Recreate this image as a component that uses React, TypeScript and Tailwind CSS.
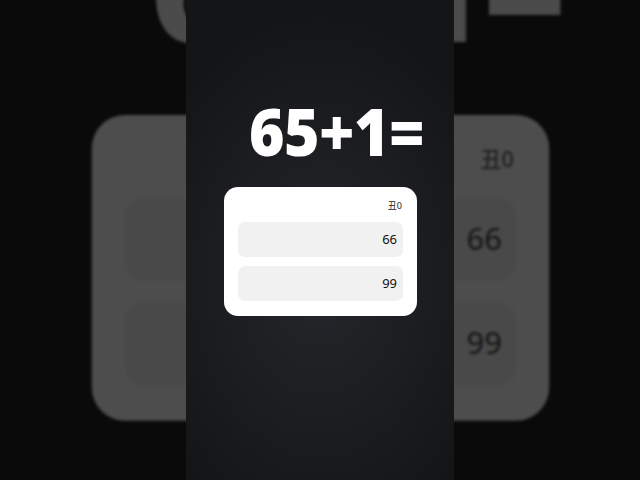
import React from "react";

function Scene({ dim }: { dim?: boolean }) {
  return (
    <div className="w-[268px] h-[480px] flex flex-col">
      <div className="pl-[63px] pt-[97px] h-[172px]">
        <div
          className={
            "inline-block origin-left scale-x-[0.92] text-[66px] leading-none font-extrabold tracking-[-0.01em] whitespace-nowrap " +
            (dim ? "text-[#4b4b4b]" : "text-white")
          }
          style={{ fontFamily: '"Open Sans", "Noto Sans", sans-serif' }}
        >
          65+1=
        </div>
      </div>
      <div
        className={
          "mt-[15px] ml-[38px] w-[193px] h-[129px] rounded-[14px] px-[14px] pt-[13px] flex flex-col " +
          (dim ? "bg-[#4d4d4d]" : "bg-white")
        }
        style={{ fontFamily: '"Noto Sans", "Noto Sans CJK SC", sans-serif' }}
      >
        <div
          className={
            "text-right text-[9px] leading-[12px] pr-[1px] h-[22px] " +
            (dim ? "text-[#151515]" : "text-[#222]")
          }
        >
          丑0
        </div>
        <div
          className={
            "h-[35px] rounded-[7px] flex items-center justify-end pr-[6px] text-[13px] " +
            (dim ? "bg-[#494949] text-[#141414]" : "bg-[#f1f1f1] text-[#111]")
          }
        >
          66
        </div>
        <div
          className={
            "mt-[9px] h-[35px] rounded-[7px] flex items-center justify-end pr-[6px] text-[13px] " +
            (dim ? "bg-[#494949] text-[#141414]" : "bg-[#f1f1f1] text-[#111]")
          }
        >
          99
        </div>
      </div>
    </div>
  );
}

export default function App() {
  return (
    <div className="w-[640px] h-[480px] bg-[#0a0a0a] relative overflow-hidden">
      <div className="absolute inset-0 overflow-hidden">
        <div className="absolute left-[186px] top-0 origin-[134.5px_239.5px] scale-[2.37] blur-[0.6px]">
          <Scene dim />
        </div>
      </div>
      <div className="relative ml-[186px] w-[268px] h-[480px] bg-[radial-gradient(ellipse_70%_55%_at_50%_58%,#24272b_0%,#1c1e21_50%,#141517_100%)]">
        <Scene />
      </div>
    </div>
  );
}
